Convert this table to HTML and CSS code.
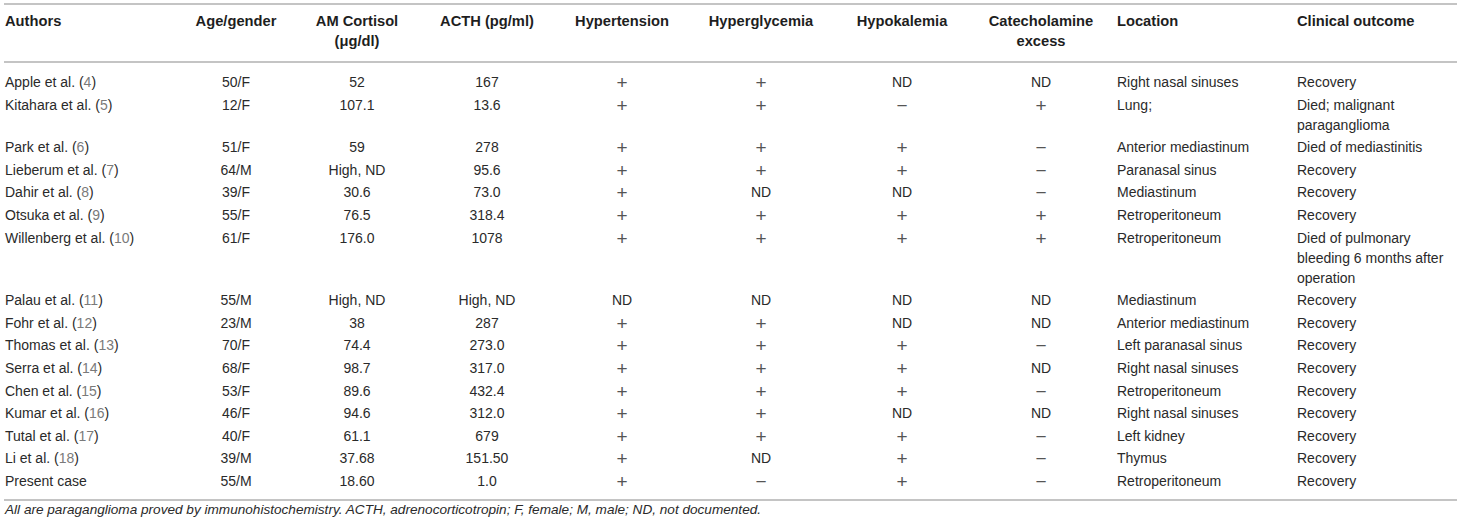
FILE: index.html
```html
<!DOCTYPE html>
<html>
<head>
<meta charset="utf-8">
<link rel="stylesheet" href="styles.css">
</head>
<body>
<div class="wrap">
<table class="tbl">
<colgroup>
<col class="c-auth"><col class="c-age"><col class="c-cort"><col class="c-acth"><col class="c-ht"><col class="c-hg"><col class="c-hk"><col class="c-cat"><col class="c-loc"><col class="c-out">
</colgroup>
<thead>
<tr>
<th class="l">Authors</th>
<th>Age/gender</th>
<th>AM Cortisol (μg/dl)</th>
<th>ACTH (pg/ml)</th>
<th>Hypertension</th>
<th>Hyperglycemia</th>
<th>Hypokalemia</th>
<th>Catecholamine excess</th>
<th class="l">Location</th>
<th class="l">Clinical outcome</th>
</tr>
</thead>
<tbody>
<tr><td class="l">Apple et al. (<span class="ref">4</span>)</td><td>50/F</td><td>52</td><td>167</td><td><span class="sg">+</span></td><td><span class="sg">+</span></td><td>ND</td><td>ND</td><td class="l">Right nasal sinuses</td><td class="l">Recovery</td></tr>
<tr><td class="l">Kitahara et al. (<span class="ref">5</span>)</td><td>12/F</td><td>107.1</td><td>13.6</td><td><span class="sg">+</span></td><td><span class="sg">+</span></td><td><span class="sg">−</span></td><td><span class="sg">+</span></td><td class="l">Lung;</td><td class="l">Died; malignant paraganglioma</td></tr>
<tr><td class="l">Park et al. (<span class="ref">6</span>)</td><td>51/F</td><td>59</td><td>278</td><td><span class="sg">+</span></td><td><span class="sg">+</span></td><td><span class="sg">+</span></td><td><span class="sg">−</span></td><td class="l">Anterior mediastinum</td><td class="l">Died of mediastinitis</td></tr>
<tr><td class="l">Lieberum et al. (<span class="ref">7</span>)</td><td>64/M</td><td>High, ND</td><td>95.6</td><td><span class="sg">+</span></td><td><span class="sg">+</span></td><td><span class="sg">+</span></td><td><span class="sg">−</span></td><td class="l">Paranasal sinus</td><td class="l">Recovery</td></tr>
<tr><td class="l">Dahir et al. (<span class="ref">8</span>)</td><td>39/F</td><td>30.6</td><td>73.0</td><td><span class="sg">+</span></td><td>ND</td><td>ND</td><td><span class="sg">−</span></td><td class="l">Mediastinum</td><td class="l">Recovery</td></tr>
<tr><td class="l">Otsuka et al. (<span class="ref">9</span>)</td><td>55/F</td><td>76.5</td><td>318.4</td><td><span class="sg">+</span></td><td><span class="sg">+</span></td><td><span class="sg">+</span></td><td><span class="sg">+</span></td><td class="l">Retroperitoneum</td><td class="l">Recovery</td></tr>
<tr><td class="l">Willenberg et al. (<span class="ref">10</span>)</td><td>61/F</td><td>176.0</td><td>1078</td><td><span class="sg">+</span></td><td><span class="sg">+</span></td><td><span class="sg">+</span></td><td><span class="sg">+</span></td><td class="l">Retroperitoneum</td><td class="l">Died of pulmonary bleeding 6 months after operation</td></tr>
<tr><td class="l">Palau et al. (<span class="ref">11</span>)</td><td>55/M</td><td>High, ND</td><td>High, ND</td><td>ND</td><td>ND</td><td>ND</td><td>ND</td><td class="l">Mediastinum</td><td class="l">Recovery</td></tr>
<tr><td class="l">Fohr et al. (<span class="ref">12</span>)</td><td>23/M</td><td>38</td><td>287</td><td><span class="sg">+</span></td><td><span class="sg">+</span></td><td>ND</td><td>ND</td><td class="l">Anterior mediastinum</td><td class="l">Recovery</td></tr>
<tr><td class="l">Thomas et al. (<span class="ref">13</span>)</td><td>70/F</td><td>74.4</td><td>273.0</td><td><span class="sg">+</span></td><td><span class="sg">+</span></td><td><span class="sg">+</span></td><td><span class="sg">−</span></td><td class="l">Left paranasal sinus</td><td class="l">Recovery</td></tr>
<tr><td class="l">Serra et al. (<span class="ref">14</span>)</td><td>68/F</td><td>98.7</td><td>317.0</td><td><span class="sg">+</span></td><td><span class="sg">+</span></td><td><span class="sg">+</span></td><td>ND</td><td class="l">Right nasal sinuses</td><td class="l">Recovery</td></tr>
<tr><td class="l">Chen et al. (<span class="ref">15</span>)</td><td>53/F</td><td>89.6</td><td>432.4</td><td><span class="sg">+</span></td><td><span class="sg">+</span></td><td><span class="sg">+</span></td><td><span class="sg">−</span></td><td class="l">Retroperitoneum</td><td class="l">Recovery</td></tr>
<tr><td class="l">Kumar et al. (<span class="ref">16</span>)</td><td>46/F</td><td>94.6</td><td>312.0</td><td><span class="sg">+</span></td><td><span class="sg">+</span></td><td>ND</td><td>ND</td><td class="l">Right nasal sinuses</td><td class="l">Recovery</td></tr>
<tr><td class="l">Tutal et al. (<span class="ref">17</span>)</td><td>40/F</td><td>61.1</td><td>679</td><td><span class="sg">+</span></td><td><span class="sg">+</span></td><td><span class="sg">+</span></td><td><span class="sg">−</span></td><td class="l">Left kidney</td><td class="l">Recovery</td></tr>
<tr><td class="l">Li et al. (<span class="ref">18</span>)</td><td>39/M</td><td>37.68</td><td>151.50</td><td><span class="sg">+</span></td><td>ND</td><td><span class="sg">+</span></td><td><span class="sg">−</span></td><td class="l">Thymus</td><td class="l">Recovery</td></tr>
<tr><td class="l">Present case</td><td>55/M</td><td>18.60</td><td>1.0</td><td><span class="sg">+</span></td><td><span class="sg">−</span></td><td><span class="sg">+</span></td><td><span class="sg">−</span></td><td class="l">Retroperitoneum</td><td class="l">Recovery</td></tr>
</tbody>
</table>
<p class="note">All are paraganglioma proved by immunohistochemistry. ACTH, adrenocorticotropin; F, female; M, male; ND, not documented.</p>
</div>
</body>
</html>
```
FILE: styles.css
```css
html, body {
  margin: 0;
  padding: 0;
  background: #ffffff;
}
body {
  font-family: "Liberation Sans", Arial, sans-serif;
  color: #2a2a2a;
  font-size: 14px;
}
.wrap {
  padding: 3px 4px 0 4px;
}
.tbl {
  width: 1453px;
  table-layout: fixed;
  border-collapse: collapse;
  border-top: 2px solid #c4c4c4;
  border-bottom: 2px solid #c4c4c4;
}
.c-auth { width: 168px; }
.c-age { width: 128px; }
.c-cort { width: 114px; }
.c-acth { width: 146px; }
.c-ht { width: 124px; }
.c-hg { width: 154px; }
.c-hk { width: 128px; }
.c-cat { width: 150px; }
.c-loc { width: 180px; }
.c-out { width: 161px; }
.tbl th {
  font-weight: bold;
  font-size: 14.7px;
  color: #1e1e1e;
  text-align: center;
  vertical-align: top;
  line-height: 20px;
  padding: 6px 2px 10px 2px;
  border-bottom: 2px solid #c4c4c4;
}
.tbl td {
  text-align: center;
  vertical-align: top;
  line-height: 20px;
  padding: 1.3px 2px;
}
.tbl th.l, .tbl td.l {
  text-align: left;
  padding-left: 1px;
}
.tbl tbody tr:first-child td {
  padding-top: 9px;
}
.tbl tbody tr:last-child td {
  padding-bottom: 8px;
}
.ref {
  color: #7a7a7a;
}
.sg {
  font-size: 19px;
  line-height: 0;
  vertical-align: -2px;
  color: #555555;
}
.note {
  margin: 1px 0 0 1px;
  font-style: italic;
  font-size: 13.6px;
  line-height: 16px;
  color: #2a2a2a;
}
```
